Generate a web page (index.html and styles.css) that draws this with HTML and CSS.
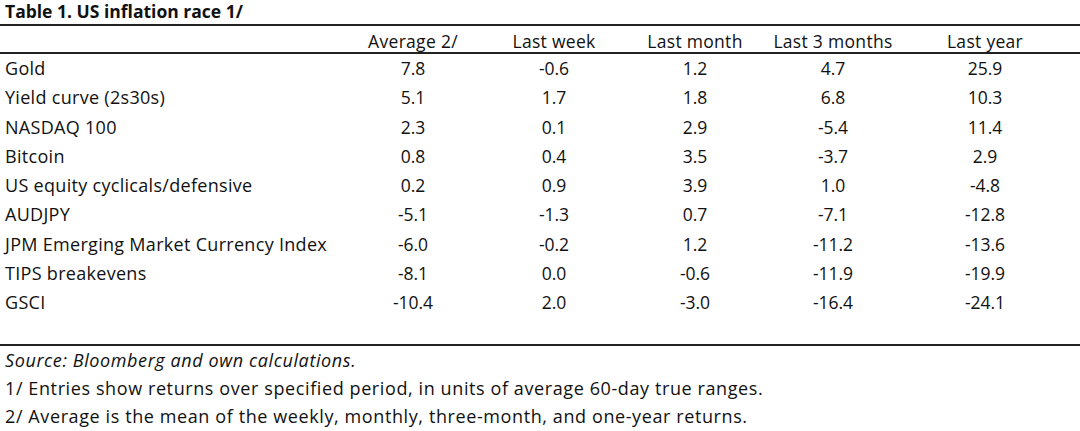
FILE: index.html
```
<!DOCTYPE html>
<html>
<head>
<meta charset="utf-8">
<link rel="stylesheet" href="styles.css">
</head>
<body>
<div class="page">
  <div class="title">Table 1. US inflation race 1/</div>
  <div class="table">
    <div class="row head">
      <div class="name"></div>
      <div class="cell">Average 2/</div>
      <div class="cell">Last week</div>
      <div class="cell">Last month</div>
      <div class="cell">Last 3 months</div>
      <div class="cell">Last year</div>
    </div>
    <div class="body">
      <div class="row"><div class="name">Gold</div><div class="cell">7.8</div><div class="cell">-0.6</div><div class="cell">1.2</div><div class="cell">4.7</div><div class="cell">25.9</div></div>
      <div class="row"><div class="name">Yield curve (2s30s)</div><div class="cell">5.1</div><div class="cell">1.7</div><div class="cell">1.8</div><div class="cell">6.8</div><div class="cell">10.3</div></div>
      <div class="row"><div class="name">NASDAQ 100</div><div class="cell">2.3</div><div class="cell">0.1</div><div class="cell">2.9</div><div class="cell">-5.4</div><div class="cell">11.4</div></div>
      <div class="row"><div class="name">Bitcoin</div><div class="cell">0.8</div><div class="cell">0.4</div><div class="cell">3.5</div><div class="cell">-3.7</div><div class="cell">2.9</div></div>
      <div class="row"><div class="name">US equity cyclicals/defensive</div><div class="cell">0.2</div><div class="cell">0.9</div><div class="cell">3.9</div><div class="cell">1.0</div><div class="cell">-4.8</div></div>
      <div class="row"><div class="name">AUDJPY</div><div class="cell">-5.1</div><div class="cell">-1.3</div><div class="cell">0.7</div><div class="cell">-7.1</div><div class="cell">-12.8</div></div>
      <div class="row"><div class="name">JPM Emerging Market Currency Index</div><div class="cell">-6.0</div><div class="cell">-0.2</div><div class="cell">1.2</div><div class="cell">-11.2</div><div class="cell">-13.6</div></div>
      <div class="row"><div class="name">TIPS breakevens</div><div class="cell">-8.1</div><div class="cell">0.0</div><div class="cell">-0.6</div><div class="cell">-11.9</div><div class="cell">-19.9</div></div>
      <div class="row"><div class="name">GSCI</div><div class="cell">-10.4</div><div class="cell">2.0</div><div class="cell">-3.0</div><div class="cell">-16.4</div><div class="cell">-24.1</div></div>
    </div>
  </div>
  <div class="notes">
    <div class="source">Source: Bloomberg and own calculations.</div>
    <div>1/ Entries show returns over specified period, in units of average 60-day true ranges.</div>
    <div>2/ Average is the mean of the weekly, monthly, three-month, and one-year returns.</div>
  </div>
</div>
</body>
</html>
```
FILE: styles.css
```
html, body {
  margin: 0;
  padding: 0;
  background: #ffffff;
}
.page {
  width: 1080px;
  font-family: "Open Sans", "Noto Sans", sans-serif;
  color: #111111;
}
.title {
  font-weight: 700;
  font-size: 17.5px;
  line-height: 22px;
  padding-left: 5px;
  height: 24px;
}
.table {
  border-top: 2px solid #222222;
  border-bottom: 2px solid #222222;
}
.row {
  display: grid;
  grid-template-columns: 345px 136px 146px 136px 140px 164px;
  font-size: 17.5px;
  line-height: 29.3px;
}
.head {
  line-height: 22px;
  padding-top: 4px;
  border-bottom: 2px solid #222222;
}
.body {
  padding-bottom: 26px;
}
.name {
  padding-left: 5px;
  white-space: nowrap;
  font-size: 18px;
  letter-spacing: 0.3px;
}
.cell {
  text-align: center;
  white-space: nowrap;
}
.head .cell {
  letter-spacing: 0.3px;
}
.notes {
  font-size: 18px;
  line-height: 28px;
  padding-left: 5px;
  letter-spacing: 0.6px;
}
.source {
  font-style: italic;
}
```
